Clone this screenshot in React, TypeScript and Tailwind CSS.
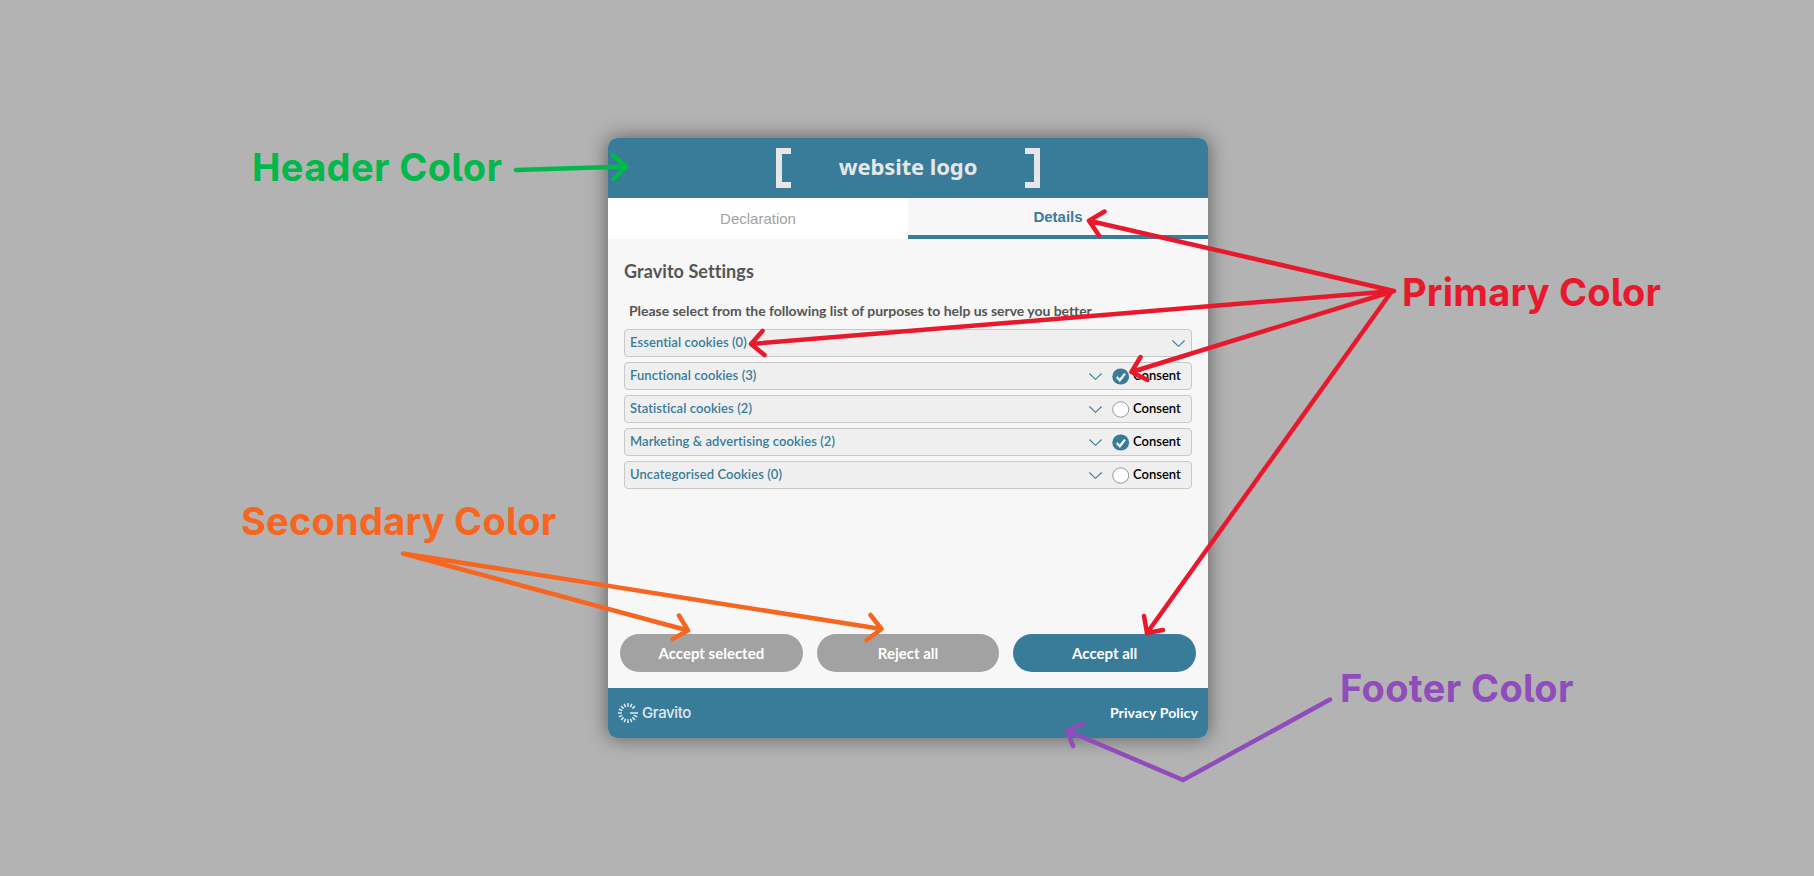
import React from "react";

type Purpose = { name: string; count: number; consent?: boolean };

const purposes: Purpose[] = [
  { name: "Essential cookies", count: 0 },
  { name: "Functional cookies", count: 3, consent: true },
  { name: "Statistical cookies", count: 2, consent: false },
  { name: "Marketing & advertising cookies", count: 2, consent: true },
  { name: "Uncategorised Cookies", count: 0, consent: false },
];

const arrows = [
  { color: "#00b84c", d: "M516 170L626 166.5M612.5 155L626.5 166.5L613.5 179" },
  {
    color: "#e8192c",
    d: "M1394 291L1089 220.7M1104.5 211.5L1089 220.7L1099 235.5M1394 291L751 344M762.5 331L751 344L764.5 355M1394 291L1131.5 372M1140.5 357L1131.5 372L1147.5 380M1392 291L1147 633M1144 616L1147 633L1163 630",
  },
  {
    color: "#f76620",
    d: "M403 553.5L688 630.5M679 615.5L688 630.5L672.5 639M403 553.5L881.5 629M870.5 615L881.5 629L866.5 640",
  },
  { color: "#914cbb", d: "M1330 699.5L1183 780L1067 730.5M1083 723.5L1067 730.5L1073 746" },
];

function Chevron() {
  return (
    <svg className="h-[7px] w-[13px]" viewBox="0 0 13 7" fill="none" stroke="#387c9a" strokeWidth="1.1">
      <path d="M0.4 0.5L6.5 6.3L12.6 0.5" />
    </svg>
  );
}

function Check({ on }: { on: boolean }) {
  return (
    <svg className="h-[17px] w-[18px]" viewBox="0 0 18 17">
      {on ? (
        <>
          <ellipse cx="8.7" cy="8.5" rx="8.4" ry="8.1" fill="#387c9a" />
          <path d="M4.8 9L7.8 12.2L13 5.6" fill="none" stroke="#fff" strokeWidth="2.2" />
        </>
      ) : (
        <ellipse cx="8.7" cy="8.5" rx="8" ry="7.7" fill="#fff" stroke="#8c8c8c" strokeWidth="0.9" />
      )}
    </svg>
  );
}

function PurposeRow({ p }: { p: Purpose }) {
  return (
    <div className="flex h-7 items-center rounded-[4px] border border-[#c8c8c8] bg-[#efefef] pl-[5px] text-[13px] font-semibold">
      <span className="flex-1 tracking-[0.08px] text-[#387c9a]">
        {p.name} ({p.count})
      </span>
      {p.consent === undefined ? (
        <span className="mr-[6px]">
          <Chevron />
        </span>
      ) : (
        <>
          <Chevron />
          <label className="ml-[10px] flex w-[79px] items-center text-black">
            <Check on={p.consent} />
            <span className="ml-[3px]">Consent</span>
          </label>
        </>
      )}
    </div>
  );
}

function GravitoMark() {
  const angles = [-45, -67.5, -90, -112.5, -135, -157.5, 180, 157.5, 135, 112.5, 90, 67.5, 45, 22.5];
  return (
    <svg className="h-5 w-5" viewBox="-10 -10 20 20" stroke="#dfeaf0" strokeWidth="1.5">
      {angles.map((a) => (
        <path key={a} d="M6.2 0H9.9" transform={`rotate(${a})`} />
      ))}
      <path d="M2 0H10" />
    </svg>
  );
}

function ConsentCard() {
  return (
    <div className="flex h-[600px] w-[600px] flex-col overflow-hidden rounded-[9px] bg-[#f7f7f7] shadow-[0_0_20px_rgba(0,0,0,0.5)]">
      <header className="flex h-[60px] items-center justify-between bg-[#387c9a] px-[168px]">
        <span className="h-10 w-[15px] border-6 border-r-0 border-[#e6e6e6]" />
        <span className="pb-[5px] font-['Noto_Sans',sans-serif] text-[22px] leading-7 font-bold tracking-[-0.1px] text-[#e6e6e6]">
          website logo
        </span>
        <span className="h-10 w-[15px] border-6 border-l-0 border-[#e6e6e6]" />
      </header>
      <nav className="flex h-[41px] font-['Liberation_Sans',sans-serif] text-[15px]">
        <button className="flex-1 bg-white pt-px text-[#a2a2a2]">Declaration</button>
        <button className="flex-1 border-b-4 border-[#387c9a] pt-px font-bold text-[#387c9a]">Details</button>
      </nav>
      <main className="flex flex-1 flex-col px-4 pt-5">
        <h1 className="text-[18px] leading-6 font-bold tracking-[0.07px] text-[#555]">Gravito Settings</h1>
        <p className="mt-[18px] pl-[5px] text-[14px] leading-5 font-bold tracking-[-0.04px] whitespace-nowrap text-[#555]">
          Please select from the following list of purposes to help us serve you better.
        </p>
        <div className="mt-[8px] flex flex-col gap-[5px] pt-0">
          {purposes.map((p) => (
            <PurposeRow key={p.name} p={p} />
          ))}
        </div>
      </main>
      <div className="mb-4 flex gap-[14px] px-3 text-[15px] font-bold text-white">
        <button className="h-[38px] flex-1 rounded-full bg-[#a2a2a2]">Accept selected</button>
        <button className="h-[38px] flex-1 rounded-full bg-[#a2a2a2]">Reject all</button>
        <button className="h-[38px] flex-1 rounded-full bg-[#387c9a]">Accept all</button>
      </div>
      <footer className="flex h-[50px] items-center justify-between bg-[#387c9a] px-[10px]">
        <span className="flex items-center gap-1 font-['Inter',sans-serif] text-[15px] font-medium tracking-[-0.4px] text-[#dfeaf0]">
          <GravitoMark />
          Gravito
        </span>
        <a className="pb-[2px] text-[14px] font-bold tracking-[0.12px] text-white">Privacy Policy</a>
      </footer>
    </div>
  );
}

const label =
  "absolute font-['Inter',sans-serif] text-[38px] leading-[46px] font-bold whitespace-nowrap [font-feature-settings:'cv05']";

export default function App() {
  return (
    <div className="relative flex h-[876px] w-[1814px] justify-center overflow-hidden bg-[#b3b3b3] pt-[138px] pl-[2px] font-['Lato',sans-serif] [font-variant-ligatures:none]">
      <ConsentCard />
      <svg
        className="pointer-events-none absolute inset-0"
        width="1814"
        height="876"
        fill="none"
        strokeWidth="4.5"
        strokeLinecap="round"
        strokeLinejoin="round"
      >
        {arrows.map((a) => (
          <path key={a.color} d={a.d} stroke={a.color} />
        ))}
      </svg>
      <span className={`${label} top-[144px] left-[252px] tracking-[0.38px] text-[#00b84c]`}>Header Color</span>
      <span className={`${label} top-[498px] left-[241px] tracking-[0.23px] text-[#f76620]`}>Secondary Color</span>
      <span className={`${label} top-[269px] left-[1402px] tracking-[0.2px] text-[#e8192c]`}>Primary Color</span>
      <span className={`${label} top-[665px] left-[1340px] tracking-[0.35px] text-[#914cbb]`}>Footer Color</span>
    </div>
  );
}
